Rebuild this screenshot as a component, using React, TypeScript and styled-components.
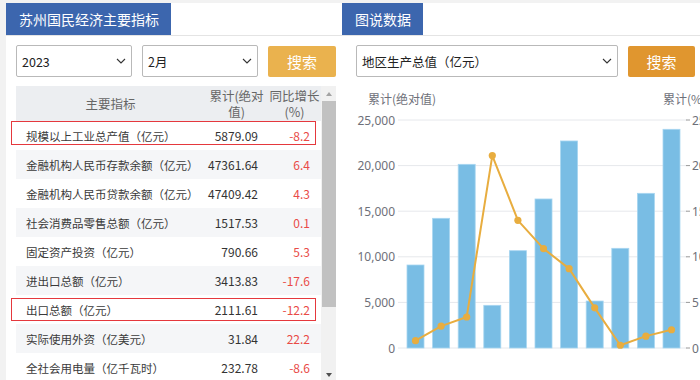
import React from "react";
import styled, { createGlobalStyle } from "styled-components";

const GlobalStyle = createGlobalStyle`
  html, body { margin: 0; padding: 0; background: #f2f2f2; overflow: hidden; }
  body { font-family: "Noto Sans CJK SC", "Noto Sans", sans-serif; }
  * { box-sizing: border-box; }
`;

const Page = styled.div`
  display: flex;
  height: 380px;
  padding: 3px 0 0 6px;
  overflow: hidden;
`;

const Panel = styled.section<{ $w: number }>`
  width: ${(p) => p.$w}px;
  flex: none;
  background: #fff;
  display: flex;
  flex-direction: column;
  overflow: hidden;
`;

const TabBar = styled.div`
  height: 33px;
  border-bottom: 1px solid #e4e4e4;
  display: flex;
`;

const Tab = styled.div`
  height: 32px;
  line-height: 32px;
  padding: 0 12px 0 13px;
  background: #3c66ae;
  color: #fff;
  font-size: 14px;
  white-space: nowrap;
`;

const Controls = styled.div<{ $pl: number }>`
  display: flex;
  gap: 10px;
  padding: 9px 0 0 ${(p) => p.$pl}px;
  height: 41px;
`;

const SelectBox = styled.div<{ $w: number }>`
  width: ${(p) => p.$w}px;
  height: 32px;
  border: 1px solid #b9b9b9;
  border-radius: 2px;
  display: flex;
  align-items: center;
  justify-content: space-between;
  padding: 0 5px 0 5px;
  font-size: 12.5px;
  color: #222;
  background: #fff;
`;

const Button = styled.div<{ $color: string; $w: number }>`
  width: ${(p) => p.$w}px;
  height: 31px;
  margin-top: 1px;
  border-radius: 2px;
  background: ${(p) => p.$color};
  color: #fff;
  font-size: 15px;
  display: flex;
  align-items: center;
  justify-content: center;
`;

const TableArea = styled.div`
  display: flex;
  margin: 9px 0 0 5px;
  height: 296px;
  width: 325px;
`;

const TableBody = styled.div`
  flex: 1;
  overflow: hidden;
  padding-left: 5px;
`;

const cols = "189px 63px 53px";

const HeaderRow = styled.div`
  display: grid;
  grid-template-columns: ${cols};
  height: 35px;
  align-items: center;
  background: #eceef1;
  color: #666;
  font-size: 12.5px;
  line-height: 16px;
  text-align: center;
`;

const Row = styled.div<{ $alt: boolean }>`
  position: relative;
  display: grid;
  grid-template-columns: ${cols};
  height: 29px;
  align-items: center;
  background: ${(p) => (p.$alt ? "#f5f6f8" : "#fff")};
  font-size: 12px;
  color: #3a3a3a;
`;

const Label = styled.div`
  padding-left: 10px;
  font-size: 11.5px;
  white-space: nowrap;
`;

const Num = styled.div<{ $pr: number; $red?: boolean }>`
  text-align: right;
  padding-right: ${(p) => p.$pr}px;
  color: ${(p) => (p.$red ? "#e94b47" : "#333")};
  white-space: nowrap;
`;

const Highlight = styled.div<{ $top: number; $h: number }>`
  position: absolute;
  left: -5px;
  right: 5px;
  top: ${(p) => p.$top}px;
  height: ${(p) => p.$h}px;
  border: 1px solid #e5383d;
  pointer-events: none;
`;

const ScrollTrack = styled.div`
  width: 15px;
  background: #f1f1f1;
  display: flex;
  flex-direction: column;
  align-items: center;
`;

const ArrowBtn = styled.div`
  height: 15px;
  width: 15px;
  display: flex;
  align-items: center;
  justify-content: center;
`;

const TriUp = styled.div`
  width: 0;
  height: 0;
  border-left: 3.5px solid transparent;
  border-right: 3.5px solid transparent;
  border-bottom: 4px solid #a3a3a3;
`;

const TriDown = styled.div`
  width: 0;
  height: 0;
  border-left: 3.5px solid transparent;
  border-right: 3.5px solid transparent;
  border-top: 4px solid #505050;
`;

const Thumb = styled.div`
  width: 14px;
  height: 206px;
  background: #c1c1c1;
`;

const Spacer = styled.div`
  flex: 1;
`;

const ChartWrap = styled.div`
  flex: 1;
`;

const Chevron = () => (
  <svg width="10" height="6" viewBox="0 0 10 6">
    <polyline points="1,1 5,5 9,1" fill="none" stroke="#333" strokeWidth="1.1" />
  </svg>
);

const rows = [
  { name: "规模以上工业总产值（亿元）", value: "5879.09", pct: "-8.2", hl: { top: 0, h: 24 } },
  { name: "金融机构人民币存款余额（亿元）", value: "47361.64", pct: "6.4" },
  { name: "金融机构人民币贷款余额（亿元）", value: "47409.42", pct: "4.3" },
  { name: "社会消费品零售总额（亿元）", value: "1517.53", pct: "0.1" },
  { name: "固定资产投资（亿元）", value: "790.66", pct: "5.3" },
  { name: "进出口总额（亿元）", value: "3413.83", pct: "-17.6" },
  { name: "出口总额（亿元）", value: "2111.61", pct: "-12.2", hl: { top: 3, h: 23 } },
  { name: "实际使用外资（亿美元）", value: "31.84", pct: "22.2" },
  { name: "全社会用电量（亿千瓦时）", value: "232.78", pct: "-8.6" },
];

const bars = [9100, 14220, 20140, 4680, 10670, 16340, 22700, 5150, 10930, 16960, 23980];
const line = [0.8, 2.4, 3.4, 21.1, 14.0, 10.9, 8.7, 4.4, 0.3, 1.3, 2.0];

const Y0 = 348;
const YTOP = 120;
const scaleL = (v: number) => Y0 - (v / 25000) * (Y0 - YTOP);
const scaleR = (v: number) => Y0 - (v / 25) * (Y0 - YTOP);
const BAND0 = 402.7;
const BANDW = 25.6;
const BARW = 17;

const Chart = () => {
  const ticks = [0, 5000, 10000, 15000, 20000, 25000];
  const pts = line.map((v, i) => [BAND0 + BANDW * (i + 0.5), scaleR(v)]);
  return (
    <svg width="358" height="303" viewBox="342 77 358 303" style={{ display: "block" }}>
      <text x={368} y={104} fontSize={12} fill="#6e7079" fontFamily="Noto Sans CJK SC, sans-serif">
        累计(绝对值)
      </text>
      <text x={663} y={104} fontSize={12} fill="#6e7079" fontFamily="Noto Sans CJK SC, sans-serif">
        累计(%)
      </text>
      {ticks.map((t, i) => {
        const y = scaleL(t);
        return (
          <g key={t}>
            <line x1={398} x2={687} y1={y} y2={y} stroke="#e6e8ec" strokeWidth={1} />
            <line x1={686} x2={690} y1={y} y2={y} stroke="#9a9a9a" strokeWidth={1} />
            <text x={395} y={y + 4.5} fontSize={12} fill="#6e7079" textAnchor="end" fontFamily="Noto Sans, sans-serif">
              {t.toLocaleString("en-US")}
            </text>
            <text x={692} y={y + 4.5} fontSize={12} fill="#6e7079" fontFamily="Noto Sans, sans-serif">
              {i * 5}
            </text>
          </g>
        );
      })}
      {bars.map((v, i) => {
        const x = BAND0 + BANDW * (i + 0.5) - BARW / 2;
        const y = scaleL(v);
        return (
          <rect key={i} x={x} y={y} width={BARW} height={Y0 - y} fill="#79bde4" stroke="#a8d6f1" strokeWidth={0.8} />
        );
      })}
      <polyline
        points={pts.map((p) => p.join(",")).join(" ")}
        fill="none"
        stroke="#e8ad3f"
        strokeWidth={2}
        strokeLinejoin="round"
      />
      {pts.map((p, i) => (
        <circle key={i} cx={p[0]} cy={p[1]} r={3.6} fill="#e8ad3f" />
      ))}
    </svg>
  );
};

export default function App() {
  return (
    <>
      <GlobalStyle />
      <Page>
        <Panel $w={336}>
          <TabBar>
            <Tab>苏州国民经济主要指标</Tab>
          </TabBar>
          <Controls $pl={10}>
            <SelectBox $w={116}>
              <span>2023</span>
              <Chevron />
            </SelectBox>
            <SelectBox $w={116}>
              <span>2月</span>
              <Chevron />
            </SelectBox>
            <Button $color="#eab24e" $w={68}>
              搜索
            </Button>
          </Controls>
          <TableArea>
            <TableBody>
              <HeaderRow>
                <div>主要指标</div>
                <div>
                  累计(绝对
                  <br />
                  值)
                </div>
                <div>
                  同比增长
                  <br />
                  (%)
                </div>
              </HeaderRow>
              {rows.map((r, i) => (
                <Row key={r.name} $alt={i % 2 === 1}>
                  <Label>{r.name}</Label>
                  <Num $pr={10}>{r.value}</Num>
                  <Num $pr={11} $red>
                    {r.pct}
                  </Num>
                  {r.hl && <Highlight $top={r.hl.top} $h={r.hl.h} />}
                </Row>
              ))}
            </TableBody>
            <ScrollTrack>
              <ArrowBtn>
                <TriUp />
              </ArrowBtn>
              <Thumb />
              <Spacer />
              <ArrowBtn>
                <TriDown />
              </ArrowBtn>
            </ScrollTrack>
          </TableArea>
        </Panel>
        <Panel $w={358}>
          <TabBar>
            <Tab>图说数据</Tab>
          </TabBar>
          <Controls $pl={14}>
            <SelectBox $w={262}>
              <span>地区生产总值（亿元）</span>
              <Chevron />
            </SelectBox>
            <Button $color="#e0962f" $w={67}>
              搜索
            </Button>
          </Controls>
          <ChartWrap>
            <Chart />
          </ChartWrap>
        </Panel>
      </Page>
    </>
  );
}
